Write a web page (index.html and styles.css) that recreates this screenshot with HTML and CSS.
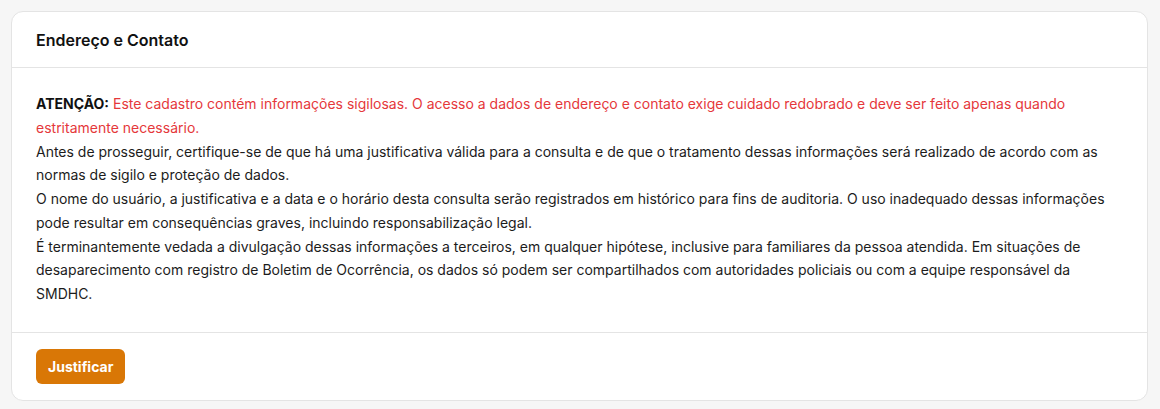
FILE: index.html
```html
<!DOCTYPE html>
<html lang="pt-BR">
<head>
<meta charset="utf-8">
<link rel="stylesheet" href="styles.css">
</head>
<body>
<section class="card">
  <header class="card-header">
    <h2 class="card-title">Endereço e Contato</h2>
  </header>
  <div class="card-body">
    <p class="notice"><strong class="label">ATENÇÃO:</strong> <span class="alert">Este cadastro contém informações sigilosas. O acesso a dados de endereço e contato exige cuidado redobrado e deve ser feito apenas quando estritamente necessário.</span><br>Antes de prosseguir, certifique-se de que há uma justificativa válida para a consulta e de que o tratamento dessas informações será realizado de acordo com as normas de sigilo e proteção de dados.<br>O nome do usuário, a justificativa e a data e o horário desta consulta serão registrados em histórico para fins de auditoria. O uso inadequado dessas informações pode resultar em consequências graves, incluindo responsabilização legal.<br>É terminantemente vedada a divulgação dessas informações a terceiros, em qualquer hipótese, inclusive para familiares da pessoa atendida. Em situações de desaparecimento com registro de Boletim de Ocorrência, os dados só podem ser compartilhados com autoridades policiais ou com a equipe responsável da SMDHC.</p>
  </div>
  <footer class="card-footer">
    <button class="btn" type="button">Justificar</button>
  </footer>
</section>
</body>
</html>
```
FILE: styles.css
```css
* { box-sizing: border-box; }
html, body { margin: 0; }
body {
  background: #f6f6f6;
  padding: 11px 12px 0 11px;
  font-family: Inter, "Noto Sans", sans-serif;
  color: #1a1a1a;
}
.card {
  background: #fff;
  border: 1px solid #e4e4e4;
  border-radius: 12px;
  width: 1137px;
}
.card-header {
  padding: 18px 24px 17px;
  border-bottom: 1px solid #e4e4e4;
}
.card-title {
  margin: 0;
  font-size: 16px;
  line-height: 20px;
  font-weight: 600;
  color: #111;
}
.card-body {
  padding: 24px 24px 26px;
  border-bottom: 1px solid #e4e4e4;
}
.notice {
  margin: 0;
  font-size: 14px;
  line-height: 23.75px;
  color: #1c1c1c;
}
.label { font-weight: 700; color: #111; }
.alert { color: #e5383b; }
.card-footer {
  padding: 16px 24px 16px;
}
.btn {
  display: block;
  height: 35px;
  padding: 0 12px;
  border: 0;
  border-radius: 6px;
  background: #d97706;
  color: #fff;
  font-family: Inter, "Noto Sans", sans-serif;
  font-size: 14px;
  font-weight: 700;
}
```
